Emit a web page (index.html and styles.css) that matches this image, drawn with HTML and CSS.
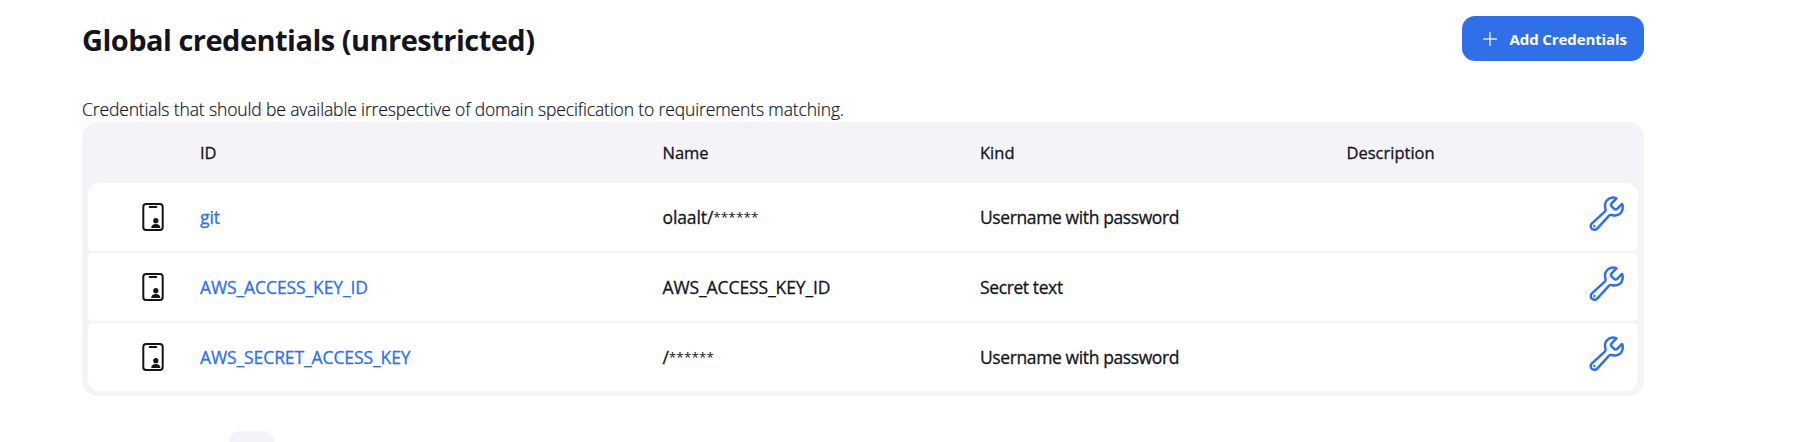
FILE: index.html
```html
<!DOCTYPE html>
<html lang="en">
<head>
<meta charset="utf-8">
<title>Global credentials</title>
<link rel="stylesheet" href="styles.css">
</head>
<body>
<svg class="defs" aria-hidden="true">
  <symbol id="card" viewBox="0 0 22 28">
    <rect x="1.3" y="1" width="19.4" height="26" rx="2.8" fill="none" stroke="currentColor" stroke-width="2"/>
    <path d="M7.6 4h6.8" stroke="currentColor" stroke-width="1.8" stroke-linecap="round"/>
    <circle cx="13.8" cy="17.7" r="2.6" fill="currentColor"/>
    <path d="M9.2 25c0-2.8 2-4 4.6-4s4.6 1.200 4.600 4z" fill="currentColor"/>
  </symbol>
  <symbol id="wrench" viewBox="0 0 512 512">
    <path d="M393.87 190a32.1 32.1 0 01-45.25 0l-26.57-26.57a32.09 32.09 0 010-45.26L382.19 58a1 1 0 00-.3-1.64c-38.82-16.64-89.15-8.16-121.11 23.57-30.58 30.35-32.32 76-21.12 115.84a31.93 31.93 0 01-9.06 32.08L64 380a48.17 48.17 0 1068 68l153.86-167a31.93 31.93 0 0131.6-9.13c39.54 10.59 84.54 8.6 114.72-21.19 32.49-32 39.5-88.56 23.75-120.93a1 1 0 00-1.6-.26z" fill="none" stroke="currentColor" stroke-width="32" stroke-linecap="round" stroke-miterlimit="10"/>
    <circle cx="96" cy="416" r="16" fill="currentColor"/>
  </symbol>
</svg>
<main class="page">
  <header class="app-bar">
    <h1 class="title">Global credentials (unrestricted)</h1>
    <a class="button">
      <svg class="plus" viewBox="0 0 14 14"><path d="M7 .5v13M.5 7h13" stroke="currentColor" stroke-width="1.5" stroke-linecap="round"/></svg>
      <span>Add Credentials</span>
    </a>
  </header>
  <p class="intro">Credentials that should be available irrespective of domain specification to requirements matching.</p>
  <section class="table">
    <div class="row head"><span></span><span>ID</span><span>Name</span><span>Kind</span><span>Description</span><span></span></div>
    <div class="row">
      <svg class="card"><use href="#card"/></svg><a class="link">git</a><span>olaalt/<span class="mask">******</span></span><span class="kind">Username with password</span><span></span><svg class="wrench"><use href="#wrench"/></svg>
    </div>
    <div class="row">
      <svg class="card"><use href="#card"/></svg><a class="link">AWS_ACCESS_KEY_ID</a><span>AWS_ACCESS_KEY_ID</span><span class="kind">Secret text</span><span></span><svg class="wrench"><use href="#wrench"/></svg>
    </div>
    <div class="row">
      <svg class="card"><use href="#card"/></svg><a class="link">AWS_SECRET_ACCESS_KEY</a><span>/<span class="mask">******</span></span><span class="kind">Username with password</span><span></span><svg class="wrench"><use href="#wrench"/></svg>
    </div>
  </section>
  <div class="size-picker"></div>
</main>
</body>
</html>
```
FILE: styles.css
```css
* { box-sizing: border-box; }
body {
  margin: 0;
  background: #fff;
  color: #14141f;
  font-family: "Open Sans", "Noto Sans", sans-serif;
}
.defs { display: none; }
.page { width: 1562px; height: 442px; margin-left: 82px; padding-top: 16px; }
.app-bar { display: flex; justify-content: space-between; height: 80px; }
.title { margin: 4px 0 0; font-size: 29px; line-height: 40px; font-weight: 700; letter-spacing: -0.52px; white-space: nowrap; }
.button {
  display: flex;
  align-items: center;
  gap: 12.5px;
  width: 182px;
  height: 45px;
  padding-left: 21px;
  border-radius: 13px;
  background: #2f70e9;
  color: #fff;
  font-size: 15px;
  font-weight: 700;
  letter-spacing: -0.1px;
  white-space: nowrap;
}
.plus { width: 14px; height: 14px; flex: none; opacity: .85; }
.intro { margin: 0; height: 26px; line-height: 26px; font-size: 17.5px; font-weight: 300; letter-spacing: -0.135px; white-space: nowrap; -webkit-text-stroke: .2px; }
.table {
  display: flex;
  flex-direction: column;
  gap: 2px;
  height: 274px;
  padding: 0 6px 5px;
  border-radius: 16px;
  background: #f3f3f8;
}
.row {
  display: grid;
  grid-template-columns: 112px 462.5px 317.5px 366.5px 240.5px 51px;
  align-items: center;
  height: 68px;
  border-radius: 5px;
  background: #fff;
  font-size: 17.5px;
  letter-spacing: -0.1px;
  white-space: nowrap;
  -webkit-text-stroke: .3px;
}
.row.head { height: 61px; margin-bottom: -2px; background: none; font-size: 16.5px; letter-spacing: 0; }
.row:nth-child(2) { border-radius: 12px 12px 5px 5px; }
.row:last-child { border-radius: 5px 5px 12px 12px; }
.card { width: 22px; height: 28px; margin-left: 54px; }
.wrench { width: 39.5px; height: 39.5px; margin: 0 0 6px; color: #2f70e9; }
.link { color: #2f70e9; }
.kind { letter-spacing: -0.39px; }
.mask { font-size: 13.5px; line-height: 1; vertical-align: 2.5px; letter-spacing: 0.1px; -webkit-text-stroke: 0; }
.size-picker { width: 45px; height: 11px; margin: 35px 0 0 147px; border-radius: 12px 12px 0 0; background: #f3f3f8; }
```
